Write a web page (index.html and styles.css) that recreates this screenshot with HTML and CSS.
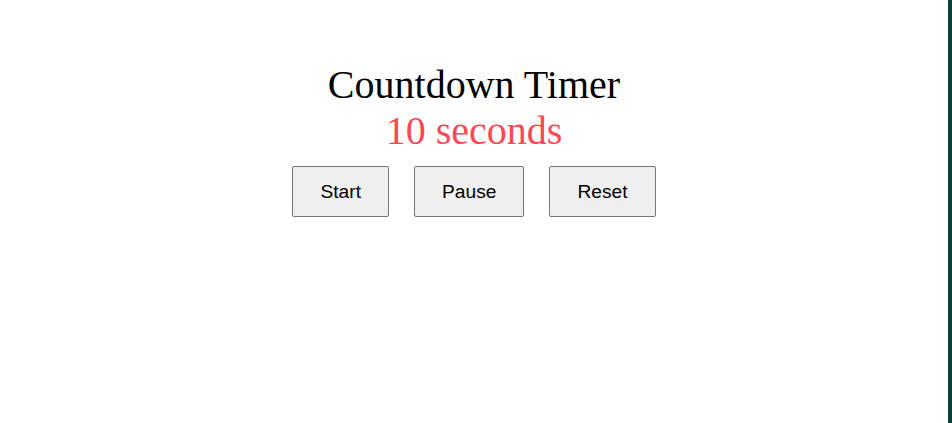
FILE: index.html
```html
<!DOCTYPE html>
<html>
<head>
<meta charset="utf-8">
<link rel="stylesheet" href="styles.css">
</head>
<body>
<div class="frame">
  <main class="timer">
    <h1 class="title">Countdown Timer</h1>
    <div class="count">10 seconds</div>
    <div class="controls">
      <button class="btn">Start</button>
      <button class="btn">Pause</button>
      <button class="btn">Reset</button>
    </div>
  </main>
  <div class="edge"></div>
</div>
</body>
</html>
```

FILE: styles.css
```css
html, body {
  margin: 0;
  padding: 0;
  background: #ffffff;
  height: 100%;
}
.frame {
  display: flex;
  height: 100%;
}
.timer {
  flex: 1;
  display: flex;
  flex-direction: column;
  align-items: center;
  padding-top: 62px;
  font-family: "Liberation Serif", "Times New Roman", serif;
}
.title {
  margin: 0;
  font-size: 40px;
  font-weight: normal;
  color: #000;
  line-height: 46px;
}
.count {
  font-size: 40px;
  color: #ff4757;
  line-height: 46px;
}
.controls {
  display: flex;
  gap: 25px;
  margin-top: 12px;
}
.btn {
  font-family: "Liberation Sans", Arial, sans-serif;
  font-size: 19.2px;
  line-height: 22px;
  padding: 14px 27px 13px;
  background: #efefef;
  border: 1px solid #767676;
  border-radius: 2px;
  color: #000;
}
.edge {
  width: 4px;
  background: #0b3b3a;
}
```
